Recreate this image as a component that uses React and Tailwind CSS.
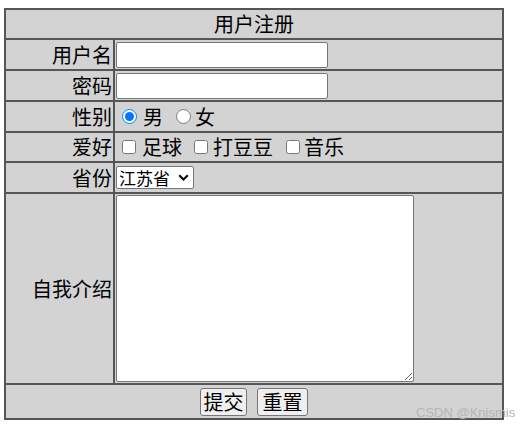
import React from 'react';

const td = 'border-2 border-[#555] p-0';

export default function App() {
  return (
    <div className="relative w-[530px] h-[429px] bg-white font-['Noto_Sans_CJK_SC','Noto_Sans',sans-serif] text-black">
      <form className="pt-[8px] pl-[4px]">
        <table className="w-[500px] table-fixed border-collapse bg-[#d3d3d3] text-[20px] leading-[24px]">
          <colgroup>
            <col className="w-[109px]" />
            <col />
          </colgroup>
          <tbody>
            <tr className="h-[30px]">
              <td colSpan={2} className={`${td} text-center`}>用户注册</td>
            </tr>
            <tr className="h-[31px]">
              <td className={`${td} text-right pr-[1px]`}>用户名</td>
              <td className={`${td} pl-[1px]`}>
                <input type="text" className="block w-[212px] h-[26px] bg-white border border-[#767676] rounded-[2px] px-1 text-[16px] outline-none" />
              </td>
            </tr>
            <tr className="h-[31px]">
              <td className={`${td} text-right pr-[1px]`}>密码</td>
              <td className={`${td} pl-[1px]`}>
                <input type="password" className="block w-[212px] h-[26px] bg-white border border-[#767676] rounded-[2px] px-1 text-[16px] outline-none" />
              </td>
            </tr>
            <tr className="h-[31px]">
              <td className={`${td} text-right pr-[1px]`}>性别</td>
              <td className={`${td} pl-[1px]`}>
                <div className="flex items-center">
                  <input type="radio" name="sex" defaultChecked className="w-[15px] h-[15px] ml-[6px] mr-[6px] accent-[#0075ff]" />
                  <span>男</span>
                  <input type="radio" name="sex" className="w-[15px] h-[15px] ml-[13px] mr-[4px] accent-[#0075ff]" />
                  <span>女</span>
                </div>
              </td>
            </tr>
            <tr className="h-[30px]">
              <td className={`${td} text-right pr-[1px]`}>爱好</td>
              <td className={`${td} pl-[1px]`}>
                <div className="flex items-center">
                  <input type="checkbox" className="w-[14px] h-[14px] ml-[6px] mr-[6px]" />
                  <span>足球</span>
                  <input type="checkbox" className="w-[14px] h-[14px] ml-[12px] mr-[5px]" />
                  <span>打豆豆</span>
                  <input type="checkbox" className="w-[14px] h-[14px] ml-[13px] mr-[4px]" />
                  <span>音乐</span>
                </div>
              </td>
            </tr>
            <tr className="h-[31px]">
              <td className={`${td} text-right pr-[1px]`}>省份</td>
              <td className={`${td} pl-[1px]`}>
                <div className="relative w-[78px] h-[23px]">
                  <select defaultValue="js" className="appearance-none block w-[78px] h-[23px] bg-white border border-[#767676] rounded-[2px] pl-[2px] pr-[20px] py-0 text-[17px] leading-[21px] outline-none">
                    <option value="js">江苏省</option>
                    <option value="zj">浙江省</option>
                    <option value="sh">上海市</option>
                  </select>
                  <svg className="absolute right-[5px] top-[8px] pointer-events-none" width="11" height="7" viewBox="0 0 11 7">
                    <path d="M1.2 1.2 L5.5 5.5 L9.8 1.2" fill="none" stroke="#000" strokeWidth="2" />
                  </svg>
                </div>
              </td>
            </tr>
            <tr className="h-[191px]">
              <td className={`${td} text-right pr-[1px]`}>自我介绍</td>
              <td className={`${td} pl-[1px]`}>
                <textarea className="block w-[298px] h-[187px] bg-white border border-[#767676] rounded-[2px] text-[16px] outline-none" />
              </td>
            </tr>
            <tr className="h-[35px]">
              <td colSpan={2} className={`${td} text-center`}>
                <div className="flex justify-center gap-[10px]">
                  <button type="submit" className="w-[47px] h-[28px] bg-[#efefef] border border-[#767676] rounded-[3px] text-[20px] leading-[24px]">提交</button>
                  <button type="reset" className="w-[51px] h-[28px] bg-[#efefef] border border-[#767676] rounded-[3px] text-[20px] leading-[24px]">重置</button>
                </div>
              </td>
            </tr>
          </tbody>
        </table>
      </form>
      <div className="absolute left-[416px] top-[405px] text-[13px] leading-[16px] text-[#b5b5b5] font-['Liberation_Sans',Arial,sans-serif]">CSDN @Knismis</div>
    </div>
  );
}
